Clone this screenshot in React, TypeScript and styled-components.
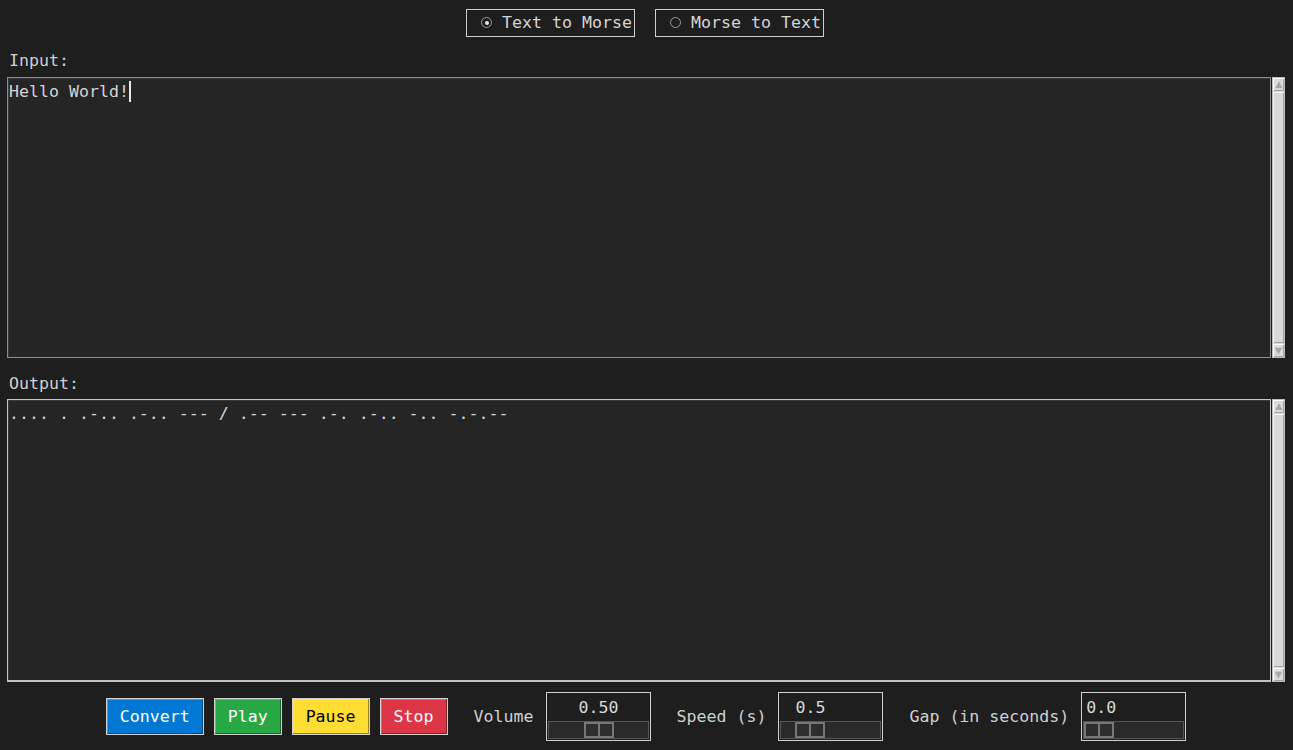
import React from 'react';
import styled, { createGlobalStyle } from 'styled-components';

const GlobalStyle = createGlobalStyle`
  html, body {
    margin: 0;
    padding: 0;
    background: #1e1e1e;
  }
  body {
    font-family: "DejaVu Sans Mono", "Liberation Mono", monospace;
    font-size: 16.6px;
    color: #d4d4d4;
  }
`;

const Page = styled.div`
  width: 1293px;
  height: 750px;
  box-sizing: border-box;
  padding: 0 8px 0 7px;
  background: #1e1e1e;
  display: flex;
  flex-direction: column;
  overflow: hidden;
`;

const ModeRow = styled.div`
  display: flex;
  justify-content: center;
  gap: 20px;
  padding-top: 9px;
  padding-right: 2px;
`;

const ModeOption = styled.label`
  display: flex;
  align-items: center;
  box-sizing: border-box;
  width: 169px;
  height: 28px;
  padding: 0 2px 0 14px;
  border: 1px solid #cfcfcf;
  line-height: 20px;
  color: #d4d4d4;
  white-space: pre;
`;

const RadioDot = styled.span<{ $checked: boolean }>`
  position: relative;
  width: 9px;
  height: 9px;
  border-radius: 50%;
  border: 1px solid #9a9a9a;
  margin-right: 10px;
  margin-top: -1px;
  flex-shrink: 0;

  &::after {
    content: '';
    display: ${({ $checked }) => ($checked ? 'block' : 'none')};
    position: absolute;
    left: 2.5px;
    top: 2.5px;
    width: 4px;
    height: 4px;
    border-radius: 50%;
    background: #e6e6e6;
  }
`;

const FieldLabel = styled.div<{ $top: number; $bottom: number }>`
  margin-top: ${({ $top }) => $top}px;
  margin-bottom: ${({ $bottom }) => $bottom}px;
  padding-left: 2px;
  height: 20px;
  line-height: 20px;
  color: #d0d0d0;
`;

const TextPane = styled.div<{ $height: number }>`
  display: flex;
  height: ${({ $height }) => $height}px;
  gap: 1px;
`;

const TextBox = styled.div<{ $focus?: boolean }>`
  flex: 1;
  box-sizing: border-box;
  background: #252525;
  border: 1px solid ${({ $focus }) => ($focus ? '#8c8c8c' : '#c4c4c4')};
  border-bottom-width: ${({ $focus }) => ($focus ? 1 : 2)}px;
  box-shadow: inset 1px 1px 0 #3a3a3a;
  padding: 4px 1px 0 1px;
  line-height: 20px;
  white-space: pre;
  color: #d4d4d4;
`;

const Caret = styled.span`
  display: inline-block;
  width: 2px;
  height: 21px;
  background: #e8e8e8;
  vertical-align: top;
  margin-top: -1px;
`;

const ScrollBar = styled.div`
  width: 13px;
  box-sizing: border-box;
  display: flex;
  flex-direction: column;
  background: #d9d9d9;
  border: 1px solid #bcbcbc;
`;

const ScrollArrow = styled.div`
  height: 13px;
  display: flex;
  align-items: center;
  justify-content: center;
  background: #d9d9d9;
  box-shadow: inset 1px 1px 0 #ffffff, inset -1px -1px 0 #a3a3a3;
`;

const ScrollThumb = styled.div`
  flex: 1;
  background: #d9d9d9;
  box-shadow: inset 1px 1px 0 #f4f4f4, inset -1px -1px 0 #a3a3a3;
  margin: 1px 0;
`;

const Controls = styled.div`
  display: flex;
  align-items: center;
  justify-content: center;
  margin-top: 10px;
`;

const ActionButton = styled.button<{ $bg: string; $fg: string; $gap: number }>`
  height: 37px;
  box-sizing: border-box;
  margin-left: ${({ $gap }) => $gap}px;
  padding: 0 13px;
  border: 1px solid #d2d2d2;
  background: ${({ $bg }) => $bg};
  color: ${({ $fg }) => $fg};
  font-family: "DejaVu Sans Mono", "Liberation Mono", monospace;
  font-size: 16.6px;
  line-height: 20px;
  box-shadow: inset -1px -1px 0 rgba(0, 0, 0, 0.4), inset 1px 1px 0 rgba(255, 255, 255, 0.25);
  cursor: pointer;
`;

const ScaleLabel = styled.span`
  margin-left: 26px;
  margin-right: 12px;
  line-height: 20px;
  color: #d0d0d0;
  white-space: pre;
`;

const ScaleBox = styled.div`
  width: 105px;
  height: 49px;
  box-sizing: border-box;
  border: 1px solid #d0d0d0;
  padding: 0 1px 1px 1px;
  display: flex;
  flex-direction: column;
`;

const ScaleValue = styled.div`
  position: relative;
  height: 28px;
`;

const ScaleValueText = styled.span`
  position: absolute;
  top: 5px;
  line-height: 20px;
  transform: translateX(-50%);
  color: #d8d8d8;
`;

const Trough = styled.div`
  position: relative;
  height: 18px;
  box-sizing: border-box;
  border: 1px solid #555555;
  background: #2a2a2a;
`;

const Thumb = styled.div`
  position: absolute;
  top: 0;
  bottom: 0;
  width: 30px;
  display: flex;
`;

const ThumbHalf = styled.div`
  flex: 1;
  box-sizing: border-box;
  border: 2px solid #777777;
  background: #2e2e2e;
  & + & {
    border-left-width: 1px;
  }
  &:first-child {
    border-right-width: 1px;
  }
`;

const ArrowIcon: React.FC<{ down?: boolean }> = ({ down }) => (
  <svg width="9" height="9" viewBox="0 0 9 9">
    {down ? (
      <>
        <polygon points="0.5,1 8.5,1 4.5,8.5" fill="#a8a8a8" />
        <polyline points="0.5,1 8.5,1" stroke="#f0f0f0" strokeWidth="1" fill="none" />
      </>
    ) : (
      <>
        <polygon points="4.5,0.5 8.5,8 0.5,8" fill="#a8a8a8" />
        <polyline points="4.5,0.5 0.5,8" stroke="#f0f0f0" strokeWidth="1" fill="none" />
      </>
    )}
  </svg>
);

const Scroll: React.FC = () => (
  <ScrollBar>
    <ScrollArrow>
      <ArrowIcon />
    </ScrollArrow>
    <ScrollThumb />
    <ScrollArrow>
      <ArrowIcon down />
    </ScrollArrow>
  </ScrollBar>
);

interface ScaleProps {
  label: string;
  value: string;
  fraction: number;
}

const THUMB_RANGE = 69;

const Scale: React.FC<ScaleProps> = ({ label, value, fraction }) => {
  const offset = Math.round(fraction * THUMB_RANGE);
  return (
    <>
      <ScaleLabel>{label}</ScaleLabel>
      <ScaleBox>
        <ScaleValue>
          <ScaleValueText style={{ left: offset + 16 + (fraction === 0 ? 2 : 0) }}>{value}</ScaleValueText>
        </ScaleValue>
        <Trough>
          <Thumb style={{ left: offset }}>
            <ThumbHalf />
            <ThumbHalf />
          </Thumb>
        </Trough>
      </ScaleBox>
    </>
  );
};

const morse = '.... . .-.. .-.. --- / .-- --- .-. .-.. -.. -.-.--';

export default function App() {
  return (
    <Page>
      <GlobalStyle />
      <ModeRow>
        <ModeOption>
          <RadioDot $checked />
          Text to Morse
        </ModeOption>
        <ModeOption>
          <RadioDot $checked={false} />
          Morse to Text
        </ModeOption>
      </ModeRow>

      <FieldLabel $top={14} $bottom={6}>Input:</FieldLabel>
      <TextPane $height={281}>
        <TextBox $focus>
          Hello World!<Caret />
        </TextBox>
        <Scroll />
      </TextPane>

      <FieldLabel $top={16} $bottom={5}>Output:</FieldLabel>
      <TextPane $height={283}>
        <TextBox>{morse}</TextBox>
        <Scroll />
      </TextPane>

      <Controls>
        <ActionButton $bg="#0078d4" $fg="#ffffff" $gap={0}>Convert</ActionButton>
        <ActionButton $bg="#28a745" $fg="#ffffff" $gap={10}>Play</ActionButton>
        <ActionButton $bg="#ffdd33" $fg="#000000" $gap={10}>Pause</ActionButton>
        <ActionButton $bg="#dc3545" $fg="#ffffff" $gap={10}>Stop</ActionButton>
        <Scale label="Volume" value="0.50" fraction={0.5} />
        <Scale label="Speed (s)" value="0.5" fraction={0.2} />
        <Scale label="Gap (in seconds)" value="0.0" fraction={0} />
      </Controls>
    </Page>
  );
}
